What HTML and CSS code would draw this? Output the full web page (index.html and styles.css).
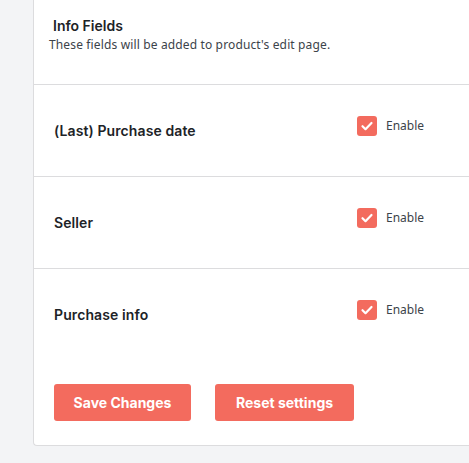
FILE: index.html
```html
<!DOCTYPE html>
<html lang="en">
<head>
<meta charset="utf-8">
<title>Info Fields</title>
<link rel="stylesheet" href="styles.css">
</head>
<body>
<div class="page">
  <section class="card">
    <header class="card-head">
      <h2 class="title">Info Fields</h2>
      <p class="desc">These fields will be added to product's edit page.</p>
    </header>
    <div class="row">
      <div class="label">(Last) Purchase date</div>
      <label class="check"><span class="box"><svg viewBox="0 0 20 20" width="20" height="20"><path d="M5.5 10.2l3 3 6-6.2" fill="none" stroke="#fff" stroke-width="2.2" stroke-linecap="round" stroke-linejoin="round"/></svg></span><span class="check-text">Enable</span></label>
    </div>
    <div class="row">
      <div class="label">Seller</div>
      <label class="check"><span class="box"><svg viewBox="0 0 20 20" width="20" height="20"><path d="M5.5 10.2l3 3 6-6.2" fill="none" stroke="#fff" stroke-width="2.2" stroke-linecap="round" stroke-linejoin="round"/></svg></span><span class="check-text">Enable</span></label>
    </div>
    <div class="row">
      <div class="label">Purchase info</div>
      <label class="check"><span class="box"><svg viewBox="0 0 20 20" width="20" height="20"><path d="M5.5 10.2l3 3 6-6.2" fill="none" stroke="#fff" stroke-width="2.2" stroke-linecap="round" stroke-linejoin="round"/></svg></span><span class="check-text">Enable</span></label>
    </div>
    <div class="actions">
      <button class="btn btn-save">Save Changes</button>
      <button class="btn btn-reset">Reset settings</button>
    </div>
  </section>
</div>
</body>
</html>
```

FILE: styles.css
```css
html, body {
  margin: 0;
  padding: 0;
  overflow: hidden;
  background: #f3f4f6;
}
.page {
  width: 469px;
  height: 463px;
  padding-left: 33px;
  box-sizing: border-box;
  overflow: hidden;
}
.card {
  width: 520px;
  background: #fff;
  border-left: 1px solid #dcdcde;
  border-bottom: 1px solid #dcdcde;
  border-bottom-left-radius: 4px;
  box-sizing: border-box;
}
.card-head {
  height: 84px;
  padding-top: 16px;
  box-sizing: border-box;
}
.title {
  margin: 0 0 0 19px;
  font-family: Inter, "Liberation Sans", sans-serif;
  font-weight: 600;
  font-size: 14px;
  line-height: 20px;
  color: #1d2327;
}
.desc {
  margin: 0 0 0 15px;
  font-family: "Noto Sans", "Open Sans", sans-serif;
  font-size: 12px;
  letter-spacing: 0.14px;
  line-height: 17px;
  color: #3c434a;
}
.row {
  height: 92px;
  border-top: 1px solid #dcdcde;
  box-sizing: border-box;
  display: flex;
  align-items: flex-start;
  padding-top: 31px;
  padding-left: 20px;
}
.row:last-of-type {
  height: 91px;
}
.label {
  width: 303px;
  margin-top: 5px;
  font-family: Inter, "Liberation Sans", sans-serif;
  font-weight: 600;
  font-size: 14px;
  letter-spacing: 0.1px;
  line-height: 20px;
  color: #1d2327;
}
.check {
  display: flex;
  align-items: center;
  gap: 9px;
}
.box {
  width: 20px;
  height: 20px;
  border-radius: 3px;
  background: #f36b5e;
  display: flex;
}
.check-text {
  font-family: "Noto Sans", "Open Sans", sans-serif;
  font-size: 12px;
  line-height: 20px;
  color: #3c434a;
}
.actions {
  display: flex;
  gap: 24px;
  padding: 24px 0 24px 20px;
}
.btn {
  height: 37px;
  border: none;
  border-radius: 3px;
  background: #f36b5e;
  color: #fff;
  font-family: Inter, "Liberation Sans", sans-serif;
  font-weight: 700;
  font-size: 14px;
  cursor: pointer;
}
.btn-save {
  width: 137px;
}
.btn-reset {
  width: 139px;
}
```
